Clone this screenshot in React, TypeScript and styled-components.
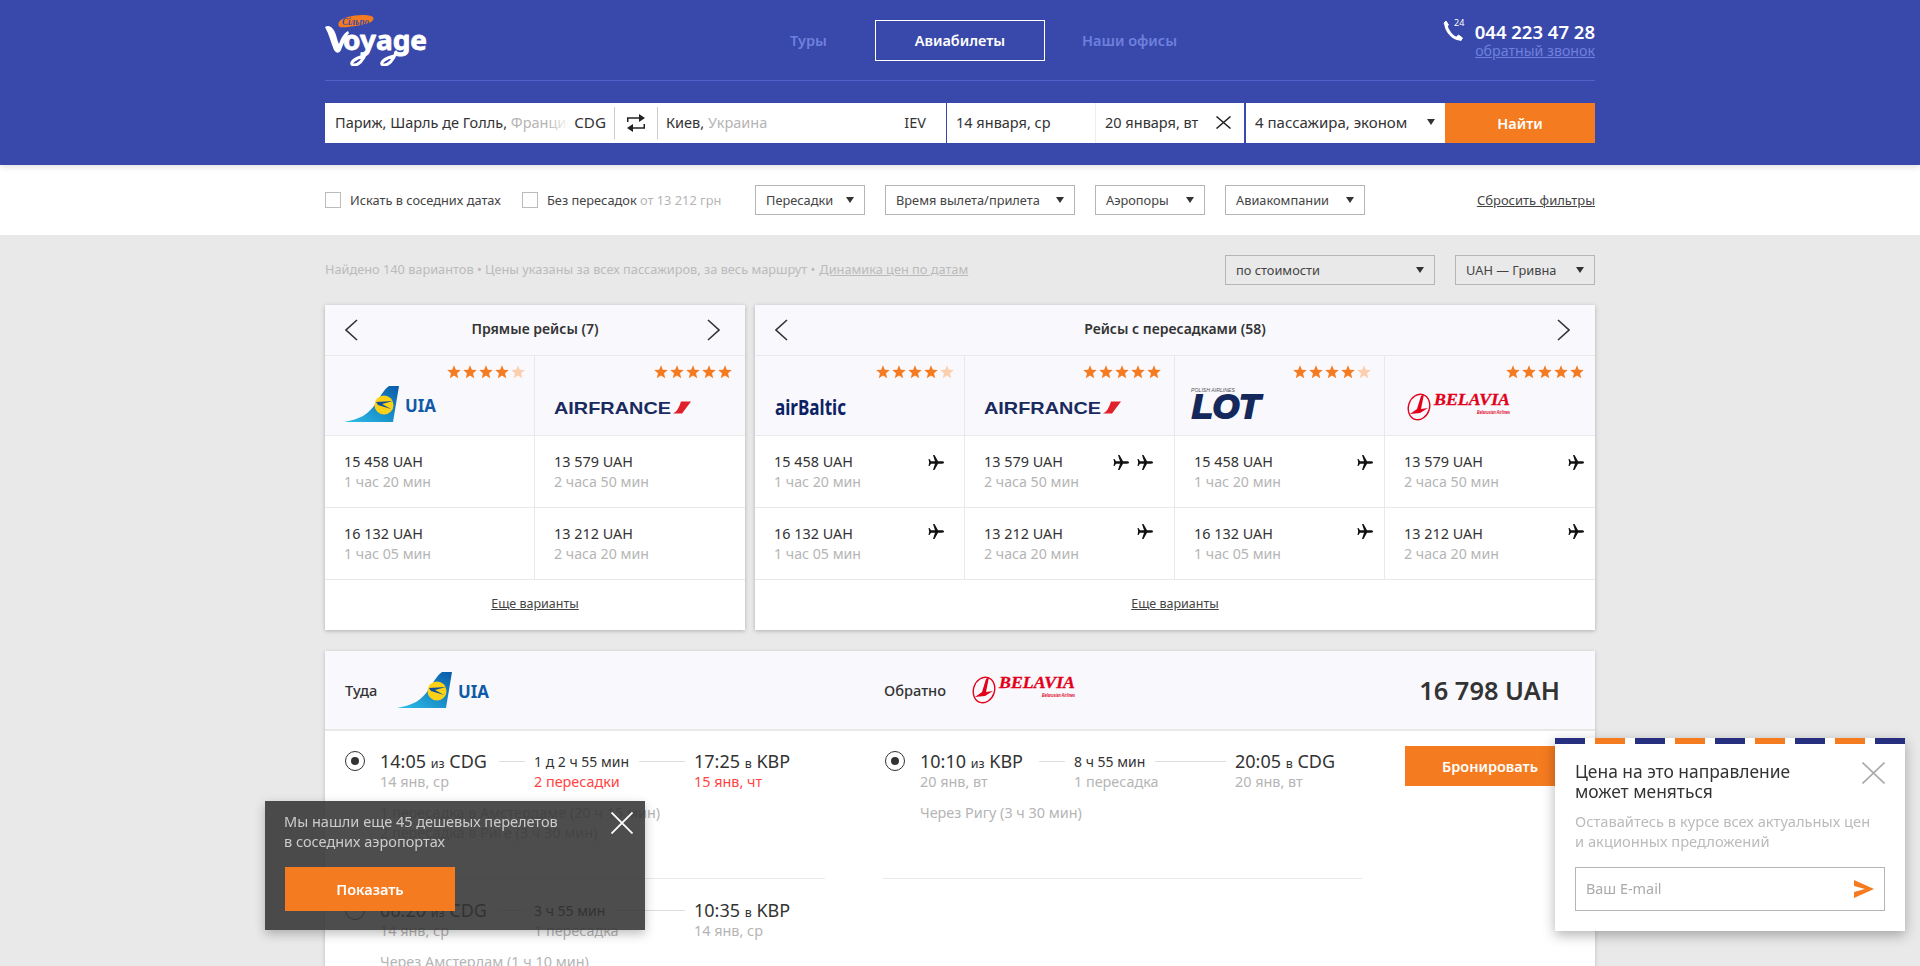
import React from 'react';
import styled, { createGlobalStyle } from 'styled-components';

const Global = createGlobalStyle`
  html, body { margin: 0; padding: 0; height: 966px; overflow: hidden; background: #e9e9e9; }
  body { font-family: "Noto Sans", "Open Sans", sans-serif; color: #333; }
  * { box-sizing: border-box; }
`;

const Container = styled.div`
  width: 1270px;
  margin: 0 auto;
`;
const Header = styled.header`
  height: 165px;
  background: #3949ab;
  box-shadow: 0 2px 6px rgba(0,0,0,.12);
  position: relative;
`;
const TopRow = styled.div`
  height: 81px;
  padding-top: 20px;
  display: flex;
  border-bottom: 1px solid #5161c9;
`;
const LogoBox = styled.div`
  width: 464px;
  margin-top: -6px;
`;
const Nav = styled.nav`
  display: flex;
  align-items: flex-start;
  flex: 1;
`;
const NavItem = styled.a<{ $active?: boolean; $ml?: number }>`
  height: 41px;
  line-height: 38px;
  margin-left: ${p => p.$ml ?? 0}px;
  font-size: 14.5px;
  font-weight: 600;
  text-align: center;
  color: ${p => (p.$active ? '#fff' : '#6f80dc')};
  width: ${p => (p.$active ? '170px' : 'auto')};
  border: ${p => (p.$active ? '1px solid #fff' : '1px solid transparent')};
`;
const Phone = styled.div`
  display: flex;
  gap: 10px;
  align-items: flex-start;
  color: #fff;
`;
const PhoneGlyph = styled.div`
  margin-top: -3px;
`;
const PhoneText = styled.div`
  text-align: right;
`;
const PhoneNumber = styled.div`
  font-size: 18.5px;
  font-weight: 600;
  line-height: 24px;
`;
const Callback = styled.a`
  display: block;
  font-size: 14.2px;
  line-height: 14px;
  color: #6f80dc;
  text-decoration: underline;
`;
const SearchBar = styled.div`
  height: 40px;
  margin-top: 22px;
  display: flex;
  background: #fff;
  font-size: 14.5px;
  color: #333;
`;
const AirportField = styled.div<{ $w: number; $pl: number; $pr: number }>`
  width: ${p => p.$w}px;
  padding: 0 ${p => p.$pr}px 2px ${p => p.$pl}px;
  display: flex;
  align-items: center;
  justify-content: space-between;
  white-space: nowrap;
  overflow: hidden;
`;
const Muted = styled.span`
  color: #b5b5b5;
`;
const FadeCode = styled.span`
  background: linear-gradient(to right, rgba(255,255,255,0), #fff 22px);
  padding-left: 26px;
  margin-left: -60px;
  position: relative;
  font-size: 15.2px;
`;
const SwapBox = styled.div`
  width: 44px;
  margin: 4px 0;
  display: flex;
  align-items: center;
  justify-content: center;
  border-left: 1px solid #ccc;
  border-right: 1px solid #ccc;
`;
const DateField = styled.div<{ $blue?: boolean }>`
  width: 149px;
  padding: 0 13px 2px 9px;
  display: flex;
  align-items: center;
  justify-content: space-between;
  white-space: nowrap;
  border-left: ${p => (p.$blue ? '1px solid #3949ab' : '1px solid #eee')};
`;
const PassField = styled.div`
  flex: 1;
  padding: 0 10px 2px 9px;
  display: flex;
  align-items: center;
  justify-content: space-between;
  white-space: nowrap;
  font-size: 15px;
  border-left: 2px solid #3949ab;
`;
const Caret = styled.i`
  display: block;
  flex: none;
  width: 0;
  height: 0;
  border-left: 4px solid transparent;
  border-right: 4px solid transparent;
  border-top: 6px solid #333;
`;
const OrangeButton = styled.button`
  border: 0;
  background: #f57b20;
  color: #fff;
  font: 600 14.5px "Noto Sans", sans-serif;
`;
const FindButton = styled(OrangeButton)`
  width: 150px;
`;
const FilterBar = styled.div`
  height: 70px;
  background: #fff;
`;
const FilterInner = styled(Container)`
  height: 70px;
  display: flex;
  align-items: center;
  font-size: 12.8px;
  color: #444;
`;
const Check = styled.label<{ $w: number }>`
  width: ${p => p.$w}px;
  display: flex;
  align-items: center;
  gap: 9px;
  white-space: nowrap;
`;
const Box = styled.span`
  width: 16px;
  height: 16px;
  border: 1px solid #bbb;
`;
const Select = styled.div<{ $w: number; $ml?: number; $gray?: boolean }>`
  width: ${p => p.$w}px;
  height: 30px;
  margin-left: ${p => p.$ml ?? 0}px;
  padding: 0 10px 1px;
  display: flex;
  align-items: center;
  justify-content: space-between;
  border: 1px solid #b5b5b5;
  font-size: 12.8px;
  color: #444;
  white-space: nowrap;
  background: ${p => (p.$gray ? '#e9e9e9' : '#fff')};
`;
const Reset = styled.a`
  margin-left: auto;
  padding-bottom: 1px;
  font-size: 13px;
  text-decoration: underline;
  color: #444;
  white-space: nowrap;
`;
const InfoRow = styled(Container)`
  height: 70px;
  display: flex;
  align-items: center;
  font-size: 12.75px;
  color: #bbb;
`;
const InfoText = styled.span`
  padding-bottom: 2px;
`;
const InfoLink = styled.a`
  text-decoration: underline;
  margin-left: 4px;
`;
const InfoSelects = styled.div`
  margin-left: auto;
  display: flex;
  gap: 20px;
`;
const Cards = styled(Container)`
  display: flex;
  gap: 10px;
`;
const Card = styled.section<{ $w: number }>`
  width: ${p => p.$w}px;
  height: 325px;
  background: #fff;
  box-shadow: 0 1px 4px rgba(0,0,0,.25);
  display: flex;
  flex-direction: column;
`;
const CardHead = styled.div`
  height: 51px;
  padding: 0 20px;
  background: #f8f8fd;
  border-bottom: 1px solid #e9e9e9;
  display: grid;
  grid-template-columns: 1fr auto 1fr;
  align-items: center;
`;
const CardTitle = styled.div`
  font-size: 14px;
  font-weight: 600;
  color: #333;
  margin-bottom: 3px;
`;
const PrevSlot = styled.div`
  justify-self: start;
  line-height: 0;
`;
const NextSlot = styled.div`
  justify-self: end;
  margin-right: 5px;
  line-height: 0;
`;
const Cols = styled.div`
  display: flex;
`;
const Col = styled.div<{ $w: number }>`
  width: ${p => p.$w}px;
  border-right: 1px solid #e9e9e9;
  &:last-child { border-right: 0; }
`;
const LogoCell = styled.div`
  height: 80px;
  padding-left: 19px;
  background: #f8f8fd;
  border-bottom: 1px solid #e9e9e9;
`;
const Stars = styled.div<{ $pr: number }>`
  display: flex;
  justify-content: flex-end;
  gap: 2px;
  padding: 9px ${p => p.$pr}px 0 0;
  height: 25px;
`;
const LogoSlot = styled.div<{ $pad: number }>`
  padding-top: ${p => p.$pad}px;
  line-height: 0;
`;
const PriceCell = styled.div`
  height: 72px;
  padding: 16px 19px 0;
  border-bottom: 1px solid #e9e9e9;
  position: relative;
`;
const Price = styled.div`
  font-size: 14.4px;
  line-height: 20px;
  color: #333;
`;
const Dur = styled.div`
  font-size: 14.2px;
  line-height: 20px;
  color: #b5b5b5;
`;
const Planes = styled.div<{ $right: number; $top: number }>`
  position: absolute;
  right: ${p => p.$right}px;
  top: ${p => p.$top}px;
  display: flex;
  gap: 8px;
  line-height: 0;
`;
const More = styled.a`
  flex: 1;
  display: flex;
  align-items: center;
  justify-content: center;
  padding-bottom: 3px;
  font-size: 12.5px;
  color: #444;
  & span { text-decoration: underline; }
`;
const Result = styled(Container)`
  margin-top: 21px;
  background: #fff;
  height: 400px;
  box-shadow: 0 1px 4px rgba(0,0,0,.2);
`;
const ResultHead = styled.div`
  height: 80px;
  background: #f8f8fd;
  border-bottom: 2px solid #e9e9e9;
  display: flex;
  align-items: center;
  padding: 0 35px 0 20px;
  font-size: 14.6px;
  font-weight: 500;
`;
const HeadGroup = styled.div<{ $w: number; $gap: number }>`
  width: ${p => p.$w}px;
  display: flex;
  align-items: center;
  gap: ${p => p.$gap}px;
  line-height: 0;
  & > span { line-height: 20px; }
`;
const Total = styled.div`
  margin-left: auto;
  font-size: 25.4px;
  font-weight: 600;
  color: #333;
`;
const ResultBody = styled.div`
  display: flex;
  padding-left: 20px;
`;
const Direction = styled.div<{ $w: number; $ml?: number; $inset?: number }>`
  width: ${p => p.$w}px;
  margin-left: ${p => p.$ml ?? 0}px;
  & > div { padding-left: ${p => p.$inset ?? 0}px; }
`;
const Leg = styled.div`
  height: 148px;
  padding-top: 19px;
  border-bottom: 1px solid #e9e9e9;
  display: flex;
  & + & { padding-top: 20px; }
`;
const Radio = styled.span<{ $on?: boolean }>`
  width: 20px;
  height: 20px;
  margin: 1px 15px 0 0;
  border-radius: 50%;
  border: 1px solid #333;
  flex: none;
  display: flex;
  align-items: center;
  justify-content: center;
  &::after {
    content: '';
    width: 8px;
    height: 8px;
    border-radius: 50%;
    background: ${p => (p.$on ? '#333' : 'transparent')};
  }
`;
const LegBody = styled.div``;
const Times = styled.div<{ $mid: number }>`
  display: grid;
  grid-template-columns: 119px 35px ${p => p.$mid}px auto;
  align-items: start;
`;
const Stop = styled.div`
  white-space: nowrap;
`;
const Big = styled.div`
  height: 22px;
  font-size: 18px;
  line-height: 22px;
  color: #333;
  white-space: nowrap;
  & small { font-size: 12.5px; line-height: 1; }
`;
const Small = styled.div<{ $red?: boolean }>`
  font-size: 14.4px;
  line-height: 20px;
  color: ${p => (p.$red ? '#f44' : '#b5b5b5')};
`;
const MidLine = styled.div`
  display: flex;
  align-items: center;
  gap: 10px;
  height: 22px;
  padding-right: 9px;
  font-size: 14px;
  white-space: nowrap;
  color: #333;
  &::after { content: ''; flex: 1; height: 1px; background: #ddd; }
`;
const Dash = styled.i`
  display: block;
  height: 1px;
  background: #ddd;
  margin: 11px 9px 0 0;
`;
const Via = styled.div`
  margin-top: 11px;
  font-size: 14.4px;
  line-height: 20px;
  color: #b5b5b5;
  white-space: nowrap;
`;
const Book = styled(OrangeButton)`
  width: 170px;
  height: 40px;
  margin: 15px 0 0 43px;
  flex: none;
`;
const DarkPop = styled.aside`
  position: fixed;
  left: 265px;
  top: 801px;
  width: 380px;
  height: 129px;
  padding: 10px 19px;
  background: rgba(50,50,50,.87);
  box-shadow: 0 4px 10px rgba(0,0,0,.25);
  color: #ccc;
  font-size: 14.5px;
  line-height: 20px;
`;
const CloseBtn = styled.span<{ $right: number; $top: number }>`
  position: absolute;
  right: ${p => p.$right}px;
  top: ${p => p.$top}px;
  line-height: 0;
`;
const ShowBtn = styled(OrangeButton)`
  display: block;
  margin: 16px 0 0 1px;
  width: 170px;
  height: 44px;
`;
const LightPop = styled.aside`
  position: fixed;
  left: 1555px;
  top: 738px;
  width: 350px;
  height: 193px;
  background: #fff;
  box-shadow: 0 4px 12px rgba(0,0,0,.3);
  padding: 23px 20px 0;
`;
const Stripes = styled.div`
  position: absolute;
  left: 0;
  top: 0;
  right: 0;
  height: 6px;
  background: repeating-linear-gradient(to right, #27307f 0 30px, transparent 30px 40px, #f57b20 40px 70px, transparent 70px 80px);
`;
const PopTitle = styled.div`
  font-size: 17.4px;
  line-height: 20px;
  color: #333;
`;
const PopText = styled.div`
  margin-top: 10px;
  font-size: 14.7px;
  line-height: 20px;
  color: #bbb;
  white-space: nowrap;
`;
const EmailBox = styled.div`
  margin-top: 16px;
  height: 44px;
  padding: 0 10px;
  border: 1px solid #b5b5b5;
  display: flex;
  align-items: center;
  justify-content: space-between;
  font-size: 14.4px;
  color: #aaa;
`;
const EmailHint = styled.span`
  padding-bottom: 2px;
`;

const CloseX = ({ w, h, c, sw }: { w: number; h: number; c: string; sw: number }) => (
  <svg width={w} height={h} viewBox={`0 0 ${w} ${h}`} fill="none" stroke={c} strokeWidth={sw}><path d={`M.5 .5L${w - 0.5} ${h - 0.5}M${w - 0.5} .5L.5 ${h - 0.5}`} /></svg>
);
const Chevron = ({ right }: { right?: boolean }) => (
  <svg width="13" height="22" viewBox="0 0 13 22" fill="none" stroke="#333" strokeWidth="1.6">
    <path d={right ? 'M1 1l11 10L1 21' : 'M12 1L1 11l11 10'} />
  </svg>
);
const Star = ({ dim }: { dim?: boolean }) => (
  <svg width="14" height="14" viewBox="0 0 14 14"><path d="M7 .2l1.800 4.500 5 .4-3.800 3.200 1.200 5L7 10.600 2.800 13.300 4 8.300.2 5.100l5-.4z" fill={dim ? '#fbcfae' : '#f57b20'} /></svg>
);
const Rating = ({ n, pr }: { n: number; pr: number }) => (
  <Stars $pr={pr}>{[0, 1, 2, 3, 4].map(i => <Star key={i} dim={i >= n} />)}</Stars>
);
const Plane = () => (
  <svg width="16" height="15" viewBox="0 0 16 15"><path d="M16 7.500c0-.8-1-1.200-2-1.200h-4L6.500 0H5l2 6.300H3L1.500 4h-1l.7 3.500L.5 11h1L3 8.700h4L5 15h1.500L10 8.700h4c1 0 2-.4 2-1.200z" fill="#111" /></svg>
);
const UIA = () => (
  <svg width="94" height="38" viewBox="0 0 94 38">
    <defs><linearGradient id="uiat" x1="0" y1="1" x2="1" y2="0"><stop offset="0" stopColor="#2cc0ea" /><stop offset="1" stopColor="#0a5ba8" /></linearGradient></defs>
    <path d="M0 37c16-3 24-7 32-19C38 8 42 3 45 1h10l-6 36z" fill="url(#uiat)" />
    <circle cx="40" cy="20" r="9.500" fill="#fcd116" />
    <path d="M32 17l17-1-11 3 9 5-13-4z" fill="#0a4f9c" />
    <text x="61" y="27" fontFamily="Noto Sans" fontWeight="700" fontSize="18" fill="#0f5aa6" textLength="31" lengthAdjust="spacingAndGlyphs">UIA</text>
  </svg>
);
const AirFrance = () => (
  <svg width="137" height="13" viewBox="0 0 137 13">
    <text x="0" y="12.500" fontFamily="Liberation Sans" fontWeight="700" fontSize="16.500" fill="#1a2a5e" textLength="117" lengthAdjust="spacingAndGlyphs">AIRFRANCE</text>
    <path d="M127 .5h10l-9 12h-9q5-2 8-12z" fill="#e0202a" />
  </svg>
);
const AirBaltic = () => (
  <svg width="74" height="18" viewBox="0 0 74 18">
    <text x="1" y="17" fontFamily="Noto Sans" fontWeight="700" fontSize="22" fill="#0b2265" textLength="71" lengthAdjust="spacingAndGlyphs">airBaltic</text>
  </svg>
);
const Lot = () => (
  <svg width="72" height="36" viewBox="0 0 72 36" overflow="visible">
    <text x="-3" y="6" fontFamily="Liberation Sans" fontSize="4.500" fontStyle="italic" fill="#555" textLength="44" lengthAdjust="spacingAndGlyphs">POLISH AIRLINES</text>
    <text x="-2" y="32" fontFamily="Liberation Sans" fontWeight="700" fontStyle="italic" fontSize="33" fill="#14285c" stroke="#14285c" strokeWidth="2" textLength="68" lengthAdjust="spacingAndGlyphs">LOT</text>
  </svg>
);
const Belavia = () => (
  <svg width="106" height="28" viewBox="0 0 106 28">
    <ellipse cx="15" cy="14" rx="10.500" ry="13" transform="rotate(18 15 14)" fill="none" stroke="#e2001a" strokeWidth="1.400" />
    <path d="M17 3l3-2-3 15 7-1-8 5-10 1 7-5z" fill="#e2001a" />
    <text x="30" y="12" fontFamily="Liberation Serif" fontWeight="700" fontStyle="italic" fontSize="16.500" fill="#e2001a" stroke="#e2001a" strokeWidth=".3" textLength="76" lengthAdjust="spacingAndGlyphs">BELAVIA</text>
    <text x="73" y="21" fontFamily="Liberation Sans" fontWeight="700" fontStyle="italic" fontSize="6" fill="#e2001a" textLength="33" lengthAdjust="spacingAndGlyphs">Belarusian Airlines</text>
  </svg>
);
const VoyageLogo = () => (
  <svg width="104" height="52" viewBox="0 0 104 52">
    <path d="M14 8c2-5 22-9 32-6 4 1 3 5-2 7-10 3-26 5-29 4-2-1-2-3-1-5z" fill="#f57b20" />
    <text x="17" y="10.500" fontFamily="Liberation Serif" fontStyle="italic" fontWeight="700" fontSize="10" fill="#3949ab" textLength="27" lengthAdjust="spacingAndGlyphs">Сільпо</text>
    <path d="M0 13c5-3 9 2 11 8 1 4 2 7 3 9 2-6 5-11 9-13l1 2c-3 4-6 12-8 17-2 4-5 3-7 0C6 29 4 20 0 13z" fill="#fff" />
    <text x="18" y="36" fontFamily="Noto Sans" fontWeight="700" fontSize="27" fill="#fff" stroke="#fff" strokeWidth=".8" strokeLinejoin="round" textLength="84" lengthAdjust="spacingAndGlyphs">oyage</text>
    <path d="M41 38c-2 8-8 14-13 13-4-2 2-7 11-9M71 38c-2 8-8 14-13 13-4-2 2-7 11-9" fill="none" stroke="#fff" strokeWidth="3" strokeLinecap="round" />
  </svg>
);
const PhoneIcon = () => (
  <svg width="22" height="26" viewBox="0 0 22 26">
    <path d="M3 7c0 6 6 14 13 15" fill="none" stroke="#fff" strokeWidth="3" />
    <path d="M1 6l2-2 2.500 4-2.500 2zM13.500 20l2-2 4 3-2 3z" fill="#fff" stroke="#fff" strokeLinejoin="round" />
    <text x="11" y="9" fontFamily="Noto Sans" fontSize="9" fill="#fff">24</text>
  </svg>
);
const Swap = () => (
  <svg width="18" height="20" viewBox="0 0 18 20">
    <path d="M.75 9V5H13M17.250 11v4H5" fill="none" stroke="#222" strokeWidth="1.500" />
    <path d="M12 1l6 4-6 4zM6 11l-6 4 6 4z" fill="#222" />
  </svg>
);
const Send = () => (
  <svg width="20" height="18" viewBox="0 0 20 18"><path d="M0 0l20 9L0 18v-6l11-3L0 6z" fill="#f57b20" /></svg>
);

type Cell = { p: string; d: string; planes?: number };
type Column = { n: number; sp: number; lp: number; pp?: number; logo: React.ReactNode; cells: Cell[] };

const directCols: Column[] = [
  { n: 4, sp: 9, lp: 4, logo: <UIA />, cells: [{ p: '15 458 UAH', d: '1 час 20 мин' }, { p: '16 132 UAH', d: '1 час 05 мин' }] },
  { n: 5, sp: 13, lp: 20, logo: <AirFrance />, cells: [{ p: '13 579 UAH', d: '2 часа 50 мин' }, { p: '13 212 UAH', d: '2 часа 20 мин' }] },
];
const transferCols: Column[] = [
  { n: 4, sp: 10, lp: 17, pp: 20, logo: <AirBaltic />, cells: [{ p: '15 458 UAH', d: '1 час 20 мин', planes: 1 }, { p: '16 132 UAH', d: '1 час 05 мин', planes: 1 }] },
  { n: 5, sp: 13, lp: 20, pp: 21, logo: <AirFrance />, cells: [{ p: '13 579 UAH', d: '2 часа 50 мин', planes: 2 }, { p: '13 212 UAH', d: '2 часа 20 мин', planes: 1 }] },
  { n: 4, sp: 13, lp: 5, pp: 11, logo: <Lot />, cells: [{ p: '15 458 UAH', d: '1 час 20 мин', planes: 1 }, { p: '16 132 UAH', d: '1 час 05 мин', planes: 1 }] },
  { n: 5, sp: 11, lp: 12, pp: 11, logo: <Belavia />, cells: [{ p: '13 579 UAH', d: '2 часа 50 мин', planes: 1 }, { p: '13 212 UAH', d: '2 часа 20 мин', planes: 1 }] },
];

const FareCard = ({ title, width, cols }: { title: string; width: number; cols: Column[] }) => (
  <Card $w={width}>
    <CardHead>
      <PrevSlot><Chevron /></PrevSlot>
      <CardTitle>{title}</CardTitle>
      <NextSlot><Chevron right /></NextSlot>
    </CardHead>
    <Cols>
      {cols.map((c, i) => (
        <Col key={i} $w={width / cols.length}>
          <LogoCell><Rating n={c.n} pr={c.sp} /><LogoSlot $pad={c.lp}>{c.logo}</LogoSlot></LogoCell>
          {c.cells.map((cell, j) => (
            <PriceCell key={j}>
              <Price>{cell.p}</Price>
              <Dur>{cell.d}</Dur>
              {cell.planes ? <Planes $right={c.pp ?? 11} $top={j === 0 ? 19 : 16}>{Array.from({ length: cell.planes }).map((_, k) => <Plane key={k} />)}</Planes> : null}
            </PriceCell>
          ))}
        </Col>
      ))}
    </Cols>
    <More><span>Еще варианты</span></More>
  </Card>
);

type LegData = { on?: boolean; from: string; fromPort: string; fromDate: string; mid: string; midSub: string; midRed?: boolean; to: string; toPort: string; toDate: string; toRed?: boolean; via: string[]; midW: number };

const LegRow = ({ d }: { d: LegData }) => (
  <Leg>
    <Radio $on={d.on} />
    <LegBody>
      <Times $mid={d.midW}>
        <Stop><Big>{d.from} <small>из</small> {d.fromPort}</Big><Small>{d.fromDate}</Small></Stop>
        <Dash />
        <Stop><MidLine>{d.mid}</MidLine><Small $red={d.midRed}>{d.midSub}</Small></Stop>
        <Stop><Big>{d.to} <small>в</small> {d.toPort}</Big><Small $red={d.toRed}>{d.toDate}</Small></Stop>
      </Times>
      <Via>{d.via.map(v => <div key={v}>{v}</div>)}</Via>
    </LegBody>
  </Leg>
);

export default function App() {
  return (
    <>
      <Global />
      <Header>
        <Container>
          <TopRow>
            <LogoBox><VoyageLogo /></LogoBox>
            <Nav>
              <NavItem>Туры</NavItem>
              <NavItem $active $ml={47}>Авиабилеты</NavItem>
              <NavItem $ml={36}>Наши офисы</NavItem>
            </Nav>
            <Phone>
              <PhoneGlyph><PhoneIcon /></PhoneGlyph>
              <PhoneText><PhoneNumber>044 223 47 28</PhoneNumber><Callback>обратный звонок</Callback></PhoneText>
            </Phone>
          </TopRow>
          <SearchBar>
            <AirportField $w={289} $pl={10} $pr={8}><span>Париж, Шарль де Голль, <Muted>Франция</Muted></span><FadeCode>CDG</FadeCode></AirportField>
            <SwapBox><Swap /></SwapBox>
            <AirportField $w={288} $pl={8} $pr={20}><span>Киев, <Muted>Украина</Muted></span><span>IEV</span></AirportField>
            <DateField $blue>14 января, ср</DateField>
            <DateField>20 января, вт<CloseX w={15} h={13} c="#222" sw={1.5} /></DateField>
            <PassField>4 пассажира, эконом<Caret /></PassField>
            <FindButton>Найти</FindButton>
          </SearchBar>
        </Container>
      </Header>
      <FilterBar>
        <FilterInner>
          <Check $w={197}><Box />Искать в соседних датах</Check>
          <Check $w={233}><Box /><span>Без пересадок <Muted>от 13 212 грн</Muted></span></Check>
          <Select $w={110}>Пересадки<Caret /></Select>
          <Select $w={190} $ml={20}>Время вылета/прилета<Caret /></Select>
          <Select $w={110} $ml={20}>Аэропоры<Caret /></Select>
          <Select $w={140} $ml={20}>Авиакомпании<Caret /></Select>
          <Reset>Сбросить фильтры</Reset>
        </FilterInner>
      </FilterBar>
      <InfoRow>
        <InfoText>Найдено 140 вариантов • Цены указаны за всех пассажиров, за весь маршрут •<InfoLink>Динамика цен по датам</InfoLink></InfoText>
        <InfoSelects>
          <Select $w={210} $gray>по стоимости<Caret /></Select>
          <Select $w={140} $gray>UAH — Гривна<Caret /></Select>
        </InfoSelects>
      </InfoRow>
      <Cards>
        <FareCard title="Прямые рейсы (7)" width={420} cols={directCols} />
        <FareCard title="Рейсы с пересадками (58)" width={840} cols={transferCols} />
      </Cards>
      <Result>
        <ResultHead>
          <HeadGroup $w={539} $gap={20}><span>Туда</span><UIA /></HeadGroup>
          <HeadGroup $w={400} $gap={23}><span>Обратно</span><Belavia /></HeadGroup>
          <Total>16 798 UAH</Total>
        </ResultHead>
        <ResultBody>
          <Direction $w={480}>
            <LegRow d={{ on: true, from: '14:05', fromPort: 'CDG', fromDate: '14 янв, ср', mid: '1 д 2 ч 55 мин', midSub: '2 пересадки', midRed: true, to: '17:25', toPort: 'KBP', toDate: '15 янв, чт', toRed: true, midW: 160, via: ['1 пересадка в Амстердаме (20 ч 15 мин)', '2 пересадка в Риге (3 ч 30 мин)'] }} />
            <LegRow d={{ from: '06:20', fromPort: 'CDG', fromDate: '14 янв, ср', mid: '3 ч 55 мин', midSub: '1 пересадка', to: '10:35', toPort: 'KBP', toDate: '14 янв, ср', midW: 160, via: ['Через Амстердам (1 ч 10 мин)'] }} />
          </Direction>
          <Direction $w={479} $ml={58} $inset={2}>
            <LegRow d={{ on: true, from: '10:10', fromPort: 'KBP', fromDate: '20 янв, вт', mid: '8 ч 55 мин', midSub: '1 пересадка', to: '20:05', toPort: 'CDG', toDate: '20 янв, вт', midW: 161, via: ['Через Ригу (3 ч 30 мин)'] }} />
          </Direction>
          <Book>Бронировать</Book>
        </ResultBody>
      </Result>
      <DarkPop>
        Мы нашли еще 45 дешевых перелетов<br />в соседних аэропортах
        <CloseBtn $right={12} $top={11}><CloseX w={22} h={22} c="#fff" sw={1.8} /></CloseBtn>
        <ShowBtn>Показать</ShowBtn>
      </DarkPop>
      <LightPop>
        <Stripes />
        <CloseBtn $right={20} $top={24}><CloseX w={23} h={22} c="#aaa" sw={1.6} /></CloseBtn>
        <PopTitle>Цена на это направление<br />может меняться</PopTitle>
        <PopText>Оставайтесь в курсе всех актуальных цен<br />и акционных предложений</PopText>
        <EmailBox><EmailHint>Ваш E-mail</EmailHint><Send /></EmailBox>
      </LightPop>
    </>
  );
}
